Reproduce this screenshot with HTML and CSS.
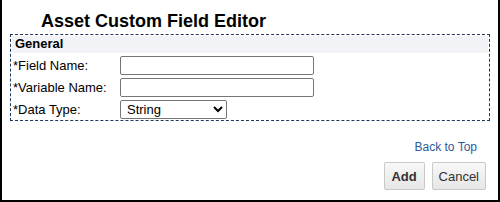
FILE: index.html
```html
<!DOCTYPE html>
<html lang="en">
<head>
  <meta charset="UTF-8">
  <title>Asset Custom Field Editor</title>
  <link rel="stylesheet" href="styles.css">
</head>
<body>
  <div class="page">
    <h2>Asset Custom Field Editor</h2>

    <div class="secao">
      <div class="secao-titulo">General</div>
      <div class="linha">
        <label for="nome">*Field Name:</label>
        <input type="text" id="nome" class="campo">
      </div>
      <div class="linha">
        <label for="variavel">*Variable Name:</label>
        <input type="text" id="variavel" class="campo">
      </div>
      <div class="linha">
        <label for="tipo">*Data Type:</label>
        <select id="tipo" class="lista">
          <option>String</option>
        </select>
      </div>
    </div>

    <div class="topo"><a href="#">Back to Top</a></div>

    <div class="acoes">
      <button class="principal">Add</button>
      <button>Cancel</button>
    </div>
  </div>
</body>
</html>
```

FILE: styles.css
```css
* { box-sizing: border-box; margin: 0; padding: 0; }
html, body {
  width: 500px; height: 202px;
  font-family: 'Liberation Sans', Arial, sans-serif;
  font-size: 13px;
  color: #000;
  background-color: #fff;
  overflow: hidden;
}
.page {
  height: 202px;
  border-left: 2px solid #000;
  border-right: 2px solid #000;
  border-bottom: 2px solid #000;
  padding: 9px 8px 0 8px;
}
h2 {
  font-size: 18px;
  font-weight: bold;
  padding-left: 31px;
  height: 25px;
  line-height: 24px;
}
.secao {
  border: 1px dashed #1b3a5c;
  padding: 1px 1px 0 1px;
}
.secao-titulo {
  background-color: #f2f3f7;
  font-weight: bold;
  height: 17px;
  line-height: 16px;
  padding-left: 3px;
  margin-bottom: 1px;
}
.linha {
  display: flex;
  align-items: center;
  height: 22px;
}
.linha label {
  width: 108px;
  padding-left: 1px;
}
.campo {
  width: 194px;
  height: 19px;
  border: 1px solid #767676;
  border-radius: 2px;
  font-family: inherit;
  font-size: 13px;
}
.lista {
  width: 107px;
  height: 19px;
  border: 1px solid #767676;
  border-radius: 2px;
  font-family: inherit;
  font-size: 13px;
  background-color: #fff;
  padding-left: 2px;
}
.topo {
  text-align: right;
  padding: 19px 13px 0 0;
  height: 41px;
  font-size: 12px;
}
.topo a {
  color: #2a5b9c;
  text-decoration: none;
}
.acoes {
  display: flex;
  justify-content: flex-end;
  gap: 7px;
  padding-right: 4px;
}
.acoes button {
  height: 28px;
  padding: 0 6px;
  min-width: 41px;
  font-family: inherit;
  font-size: 13px;
  color: #333;
  background: linear-gradient(#f8f8f8, #e6e6e6);
  border: 1px solid #c9c9c9;
  border-radius: 2px;
}
.acoes .principal {
  font-weight: bold;
}
```
